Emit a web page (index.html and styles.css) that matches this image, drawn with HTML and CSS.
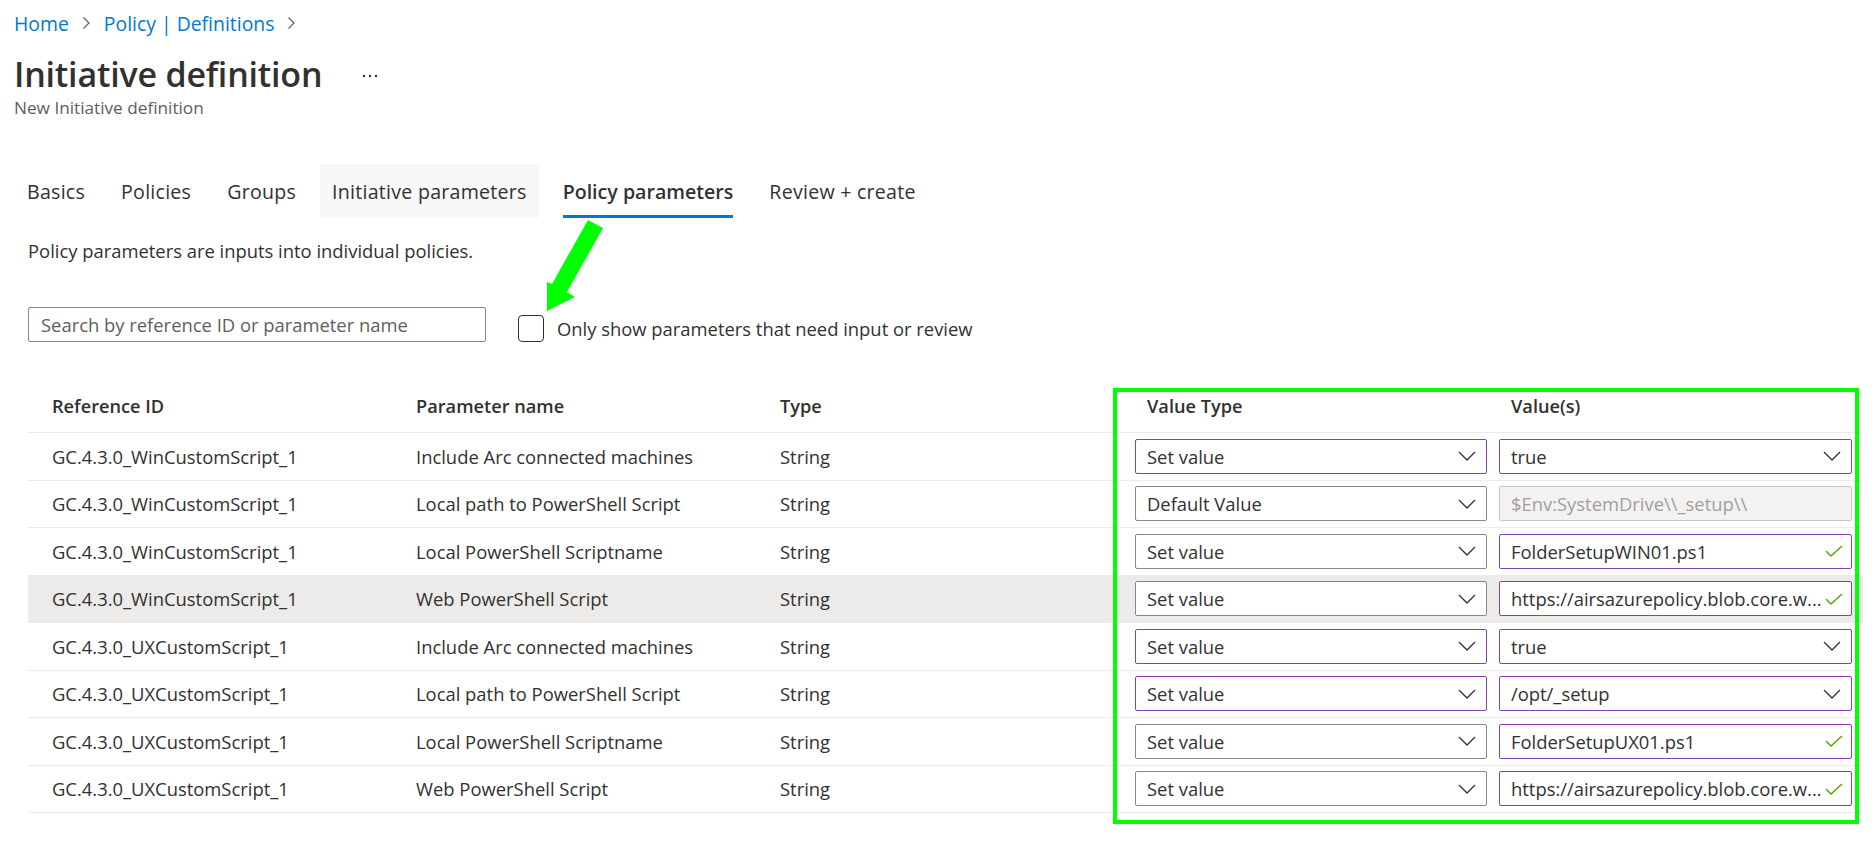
FILE: index.html
```html
<!DOCTYPE html>
<html lang="en">
<head>
<meta charset="utf-8">
<title>Initiative definition</title>
<link rel="stylesheet" href="styles.css">
</head>
<body>
<div class="page">
  <nav class="crumbs">
    <a class="crumb-link">Home</a>
    <svg class="crumb-sep" width="9" height="14" viewBox="0 0 9 14"><path d="M1.5 1.5 L7 7 L1.5 12.5" fill="none" stroke="#605e5c" stroke-width="1.2"/></svg>
    <a class="crumb-link">Policy | Definitions</a>
    <svg class="crumb-sep" width="9" height="14" viewBox="0 0 9 14"><path d="M1.5 1.5 L7 7 L1.5 12.5" fill="none" stroke="#605e5c" stroke-width="1.2"/></svg>
  </nav>
  <header class="title-row">
    <h1 class="title">Initiative definition</h1>
    <span class="more">
      <svg width="16" height="4" viewBox="0 0 16 4"><circle cx="2" cy="2" r="1.2" fill="#323130"/><circle cx="8" cy="2" r="1.2" fill="#323130"/><circle cx="14" cy="2" r="1.2" fill="#323130"/></svg>
    </span>
  </header>
  <div class="subtitle">New Initiative definition</div>

  <div class="tabs">
    <div class="tab">Basics</div>
    <div class="tab">Policies</div>
    <div class="tab">Groups</div>
    <div class="tab tab-hover">Initiative parameters</div>
    <div class="tab tab-active">Policy parameters</div>
    <div class="tab">Review + create</div>
  </div>

  <p class="desc">Policy parameters are inputs into individual policies.</p>

  <div class="filters">
    <div class="search">Search by reference ID or parameter name</div>
    <label class="check">
      <span class="check-box"></span>
      <span class="check-label">Only show parameters that need input or review</span>
    </label>
  </div>

  <div class="table">
    <div class="row head">
      <div class="cell">Reference ID</div>
      <div class="cell">Parameter name</div>
      <div class="cell">Type</div>
      <div class="cell">Value Type</div>
      <div class="cell">Value(s)</div>
    </div>

    <div class="row">
      <div class="cell">GC.4.3.0_WinCustomScript_1</div>
      <div class="cell">Include Arc connected machines</div>
      <div class="cell">String</div>
      <div class="cell sel-cell"><div class="field dirty"><span class="field-text">Set value</span><svg class="chev" width="18" height="10" viewBox="0 0 18 10"><path d="M1 1 L9 9 L17 1" fill="none" stroke="#323130" stroke-width="1.3"/></svg></div></div>
      <div class="cell sel-cell"><div class="field dirty"><span class="field-text">true</span><svg class="chev" width="18" height="10" viewBox="0 0 18 10"><path d="M1 1 L9 9 L17 1" fill="none" stroke="#323130" stroke-width="1.3"/></svg></div></div>
    </div>

    <div class="row">
      <div class="cell">GC.4.3.0_WinCustomScript_1</div>
      <div class="cell">Local path to PowerShell Script</div>
      <div class="cell">String</div>
      <div class="cell sel-cell"><div class="field"><span class="field-text">Default Value</span><svg class="chev" width="18" height="10" viewBox="0 0 18 10"><path d="M1 1 L9 9 L17 1" fill="none" stroke="#323130" stroke-width="1.3"/></svg></div></div>
      <div class="cell sel-cell"><div class="field disabled"><span class="field-text">$Env:SystemDrive\\_setup\\</span></div></div>
    </div>

    <div class="row">
      <div class="cell">GC.4.3.0_WinCustomScript_1</div>
      <div class="cell">Local PowerShell Scriptname</div>
      <div class="cell">String</div>
      <div class="cell sel-cell"><div class="field"><span class="field-text">Set value</span><svg class="chev" width="18" height="10" viewBox="0 0 18 10"><path d="M1 1 L9 9 L17 1" fill="none" stroke="#323130" stroke-width="1.3"/></svg></div></div>
      <div class="cell sel-cell"><div class="field dirty"><span class="field-text">FolderSetupWIN01.ps1</span><svg class="ok" width="18" height="12" viewBox="0 0 18 12"><path d="M1 6 L6 11 L17 1" fill="none" stroke="#57a300" stroke-width="1.4"/></svg></div></div>
    </div>

    <div class="row selected">
      <div class="cell">GC.4.3.0_WinCustomScript_1</div>
      <div class="cell">Web PowerShell Script</div>
      <div class="cell">String</div>
      <div class="cell sel-cell"><div class="field"><span class="field-text">Set value</span><svg class="chev" width="18" height="10" viewBox="0 0 18 10"><path d="M1 1 L9 9 L17 1" fill="none" stroke="#323130" stroke-width="1.3"/></svg></div></div>
      <div class="cell sel-cell"><div class="field dirty"><span class="field-text">https://airsazurepolicy.blob.core.w...</span><svg class="ok" width="18" height="12" viewBox="0 0 18 12"><path d="M1 6 L6 11 L17 1" fill="none" stroke="#57a300" stroke-width="1.4"/></svg></div></div>
    </div>

    <div class="row">
      <div class="cell">GC.4.3.0_UXCustomScript_1</div>
      <div class="cell">Include Arc connected machines</div>
      <div class="cell">String</div>
      <div class="cell sel-cell"><div class="field dirty"><span class="field-text">Set value</span><svg class="chev" width="18" height="10" viewBox="0 0 18 10"><path d="M1 1 L9 9 L17 1" fill="none" stroke="#323130" stroke-width="1.3"/></svg></div></div>
      <div class="cell sel-cell"><div class="field dirty"><span class="field-text">true</span><svg class="chev" width="18" height="10" viewBox="0 0 18 10"><path d="M1 1 L9 9 L17 1" fill="none" stroke="#323130" stroke-width="1.3"/></svg></div></div>
    </div>

    <div class="row">
      <div class="cell">GC.4.3.0_UXCustomScript_1</div>
      <div class="cell">Local path to PowerShell Script</div>
      <div class="cell">String</div>
      <div class="cell sel-cell"><div class="field dirty"><span class="field-text">Set value</span><svg class="chev" width="18" height="10" viewBox="0 0 18 10"><path d="M1 1 L9 9 L17 1" fill="none" stroke="#323130" stroke-width="1.3"/></svg></div></div>
      <div class="cell sel-cell"><div class="field dirty"><span class="field-text">/opt/_setup</span><svg class="chev" width="18" height="10" viewBox="0 0 18 10"><path d="M1 1 L9 9 L17 1" fill="none" stroke="#323130" stroke-width="1.3"/></svg></div></div>
    </div>

    <div class="row">
      <div class="cell">GC.4.3.0_UXCustomScript_1</div>
      <div class="cell">Local PowerShell Scriptname</div>
      <div class="cell">String</div>
      <div class="cell sel-cell"><div class="field"><span class="field-text">Set value</span><svg class="chev" width="18" height="10" viewBox="0 0 18 10"><path d="M1 1 L9 9 L17 1" fill="none" stroke="#323130" stroke-width="1.3"/></svg></div></div>
      <div class="cell sel-cell"><div class="field dirty"><span class="field-text">FolderSetupUX01.ps1</span><svg class="ok" width="18" height="12" viewBox="0 0 18 12"><path d="M1 6 L6 11 L17 1" fill="none" stroke="#57a300" stroke-width="1.4"/></svg></div></div>
    </div>

    <div class="row">
      <div class="cell">GC.4.3.0_UXCustomScript_1</div>
      <div class="cell">Web PowerShell Script</div>
      <div class="cell">String</div>
      <div class="cell sel-cell"><div class="field"><span class="field-text">Set value</span><svg class="chev" width="18" height="10" viewBox="0 0 18 10"><path d="M1 1 L9 9 L17 1" fill="none" stroke="#323130" stroke-width="1.3"/></svg></div></div>
      <div class="cell sel-cell"><div class="field dirty"><span class="field-text">https://airsazurepolicy.blob.core.w...</span><svg class="ok" width="18" height="12" viewBox="0 0 18 12"><path d="M1 6 L6 11 L17 1" fill="none" stroke="#57a300" stroke-width="1.4"/></svg></div></div>
    </div>
  </div>

  <svg class="arrow" width="70" height="100" viewBox="540 215 70 100">
    <polygon points="588,220 603,228 567,292 575,297 547,311 547,282 552,284" fill="#00ff00"/>
  </svg>
  <div class="callout"></div>
</div>
</body>
</html>
```

FILE: styles.css
```css
* { box-sizing: border-box; }

html, body {
  margin: 0;
  padding: 0;
  background: #ffffff;
}

body {
  font-family: "Open Sans", "Noto Sans", sans-serif;
  color: #323130;
  font-size: 18.4px;
}

.page {
  position: relative;
  width: 1875px;
  height: 855px;
  overflow: hidden;
}

/* breadcrumb */
.crumbs {
  display: flex;
  align-items: center;
  height: 46px;
  padding-left: 14px;
  font-size: 19.4px;
  gap: 13px;
}
.crumb-link {
  color: #0078d4;
  text-decoration: none;
}
.crumb-sep { display: block; }

/* title */
.title-row {
  display: flex;
  align-items: center;
  height: 40px;
  margin-top: 8px;
  padding-left: 14px;
}
.title {
  margin: 0;
  font-size: 34px;
  font-weight: 600;
  line-height: 40px;
  letter-spacing: -0.2px;
}
.more {
  display: flex;
  align-items: center;
  margin-left: 40px;
  margin-top: 4px;
}
.subtitle {
  margin-top: 2px;
  padding-left: 14px;
  height: 24px;
  line-height: 24px;
  font-size: 17.2px;
  color: #605e5c;
}

/* tabs */
.tabs {
  display: flex;
  margin-top: 44px;
  padding-left: 15px;
  height: 54px;
  gap: 12px;
}
.tab {
  position: relative;
  display: flex;
  align-items: center;
  padding: 0 12px;
  height: 54px;
  font-size: 19.6px;
  letter-spacing: 0.25px;
  color: #323130;
  white-space: nowrap;
}
.tab-hover { background: #f8f8f8; }
.tab-active { font-weight: 600; letter-spacing: 0; }
.tab-active::after {
  content: "";
  position: absolute;
  left: 12px;
  right: 12px;
  bottom: 0;
  height: 3px;
  background: #0078d4;
}

/* description */
.desc {
  margin: 21px 0 0;
  padding-left: 28px;
  height: 24px;
  line-height: 24px;
}

/* filters */
.filters {
  display: flex;
  align-items: center;
  margin-top: 44px;
  padding-left: 28px;
  height: 35px;
}
.search {
  width: 458px;
  height: 35px;
  border: 1px solid #8a8886;
  border-radius: 2px;
  padding-left: 12px;
  display: flex;
  align-items: center;
  color: #605e5c;
  font-size: 18.4px;
}
.check {
  display: flex;
  align-items: center;
  margin-left: 32px;
  margin-top: 8px;
  gap: 13px;
}
.check-box {
  width: 26px;
  height: 27px;
  border: 1px solid #323130;
  border-radius: 4px;
  background: #fff;
}
.check-label { white-space: nowrap; }

/* table */
.table {
  margin-top: 37px;
  margin-left: 28px;
  width: 1835px;
}
.row {
  display: grid;
  grid-template-columns: 364px 364px 367px 364px 376px;
  align-items: center;
  height: 47.5px;
  border-bottom: 1px solid #edebe9;
}
.row.head {
  height: 54px;
  font-weight: 600;
  font-size: 18.2px;
}
.row.selected { background: #edebe9; }
.cell {
  padding-left: 24px;
  white-space: nowrap;
  overflow: hidden;
}
.cell.sel-cell { padding-left: 12px; overflow: visible; }

.field {
  display: flex;
  align-items: center;
  justify-content: space-between;
  width: 352px;
  height: 35px;
  border: 1px solid #8a8886;
  border-radius: 2px;
  background: #fff;
  padding: 0 10px 0 11px;
}
.sel-cell:last-child .field { width: 353px; }
.field.dirty { border-color: #8a3fb0; }
.field.disabled {
  background: #f3f2f1;
  border-color: #c8c6c4;
  color: #a19f9d;
}
.field-text {
  white-space: nowrap;
  overflow: hidden;
}
.chev { flex: none; }
.ok { flex: none; margin-right: -2px; }

/* annotations */
.arrow {
  position: absolute;
  left: 540px;
  top: 215px;
  pointer-events: none;
}
.callout {
  position: absolute;
  left: 1113px;
  top: 388px;
  width: 746px;
  height: 436px;
  border: 4px solid #00ff00;
  pointer-events: none;
}
```
